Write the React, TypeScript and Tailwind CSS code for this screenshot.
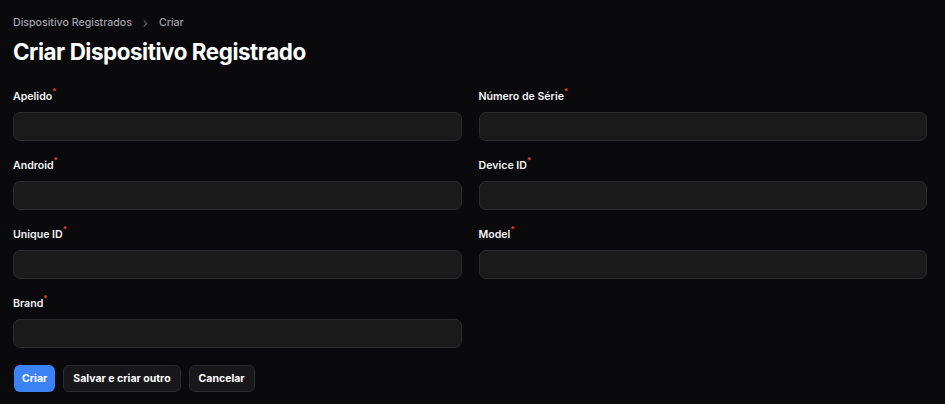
import React from "react";

function Field({ label }: { label: string }) {
  return (
    <div className="flex flex-col gap-[7px]">
      <label className="text-[10.6px] leading-4 font-semibold text-[#f4f4f5]">
        {label}
        <sup className="text-[#ef4444] font-semibold text-[8px] top-[-0.7em]">*</sup>
      </label>
      <div className="h-[29px] rounded-[7px] bg-[#1a1a1b] border border-[#2b2b2d]" />
    </div>
  );
}

export default function App() {
  return (
    <div
      className="min-h-[404px] bg-[#0a0a0c] pl-[13px] pr-[18px] pt-[15px]"
      style={{ fontFamily: "Inter, 'Noto Sans', sans-serif" }}
    >
      <nav className="flex items-center text-[10.6px] leading-4 font-medium text-[#a1a1aa]">
        <span>Dispositivo Registrados</span>
        <svg className="mx-[8px]" width="11" height="11" viewBox="0 0 24 24" fill="none" stroke="#71717a" strokeWidth="2.2" strokeLinecap="round" strokeLinejoin="round">
          <path d="M9 6l6 6-6 6" />
        </svg>
        <span>Criar</span>
      </nav>
      <h1 className="mt-[5px] text-[22.4px] leading-8 font-bold text-white tracking-[-0.02em]">
        Criar Dispositivo Registrado
      </h1>
      <div className="mt-[21px] grid grid-cols-2 gap-x-[17px] gap-y-[17px]">
        <Field label="Apelido" />
        <Field label="Número de Série" />
        <Field label="Android" />
        <Field label="Device ID" />
        <Field label="Unique ID" />
        <Field label="Model" />
        <Field label="Brand" />
      </div>
      <div className="mt-[17px] flex gap-[8px] pl-[1px]">
        <button className="h-[27px] px-[8px] rounded-[6px] bg-[#3b82f6] text-white text-[10.5px] font-bold">
          Criar
        </button>
        <button className="h-[27px] px-[9px] rounded-[6px] bg-[#18181a] border border-[#2b2b2d] text-white text-[10.5px] font-bold">
          Salvar e criar outro
        </button>
        <button className="h-[27px] px-[9px] rounded-[6px] bg-[#18181a] border border-[#2b2b2d] text-white text-[10.5px] font-bold">
          Cancelar
        </button>
      </div>
    </div>
  );
}
